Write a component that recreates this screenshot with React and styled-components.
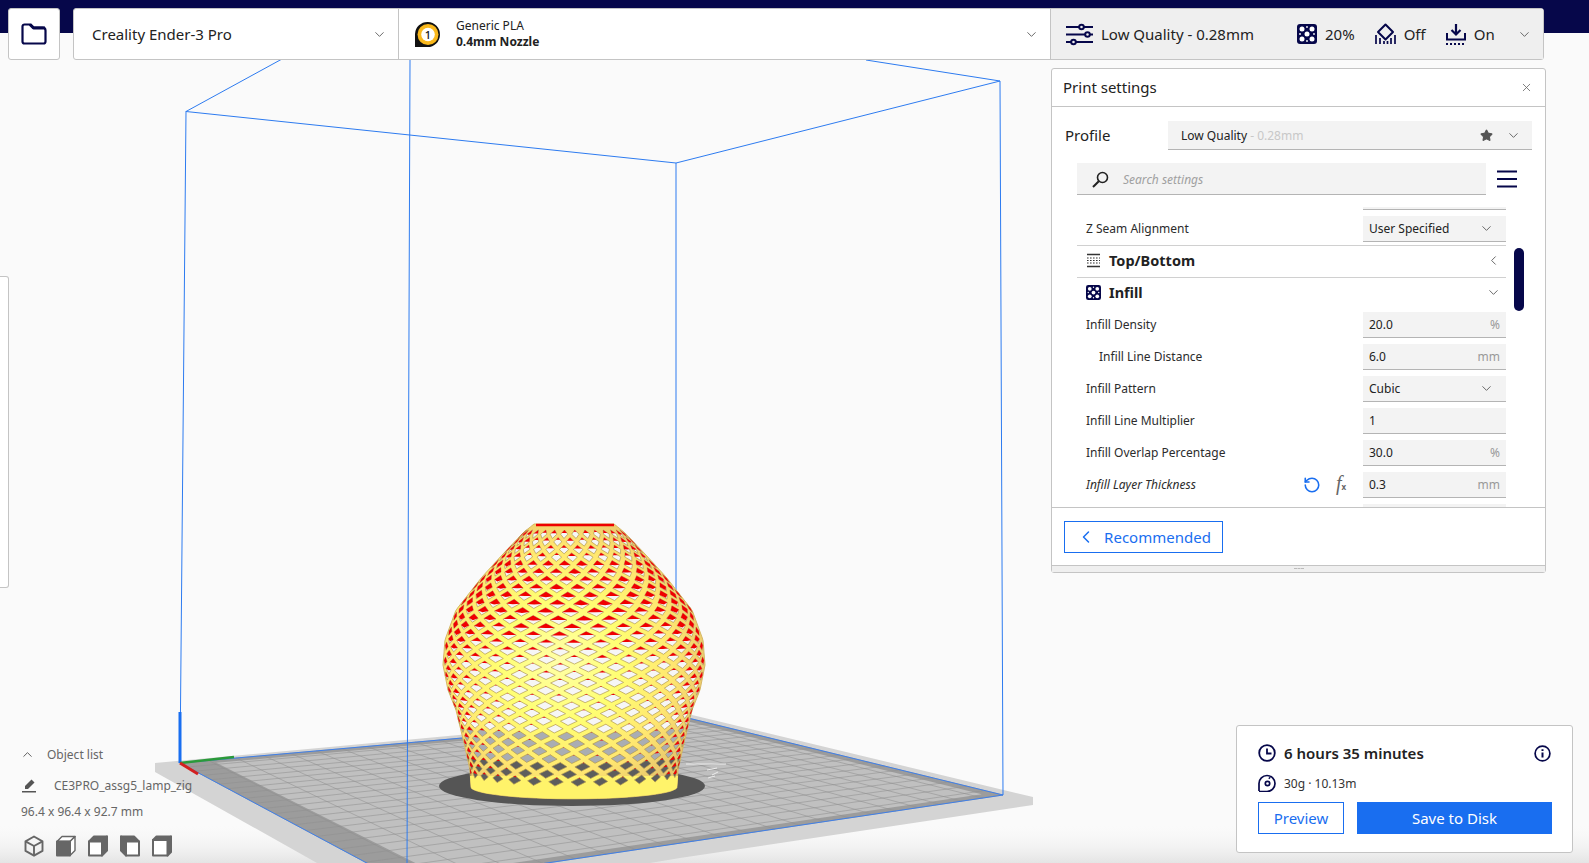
import React from "react";
import styled, { createGlobalStyle } from "styled-components";
import { X, ChevronDown, ChevronLeft, ChevronUp, Star, RotateCcw } from "lucide-react";

const NAVY = "#06074a";
const BLUE = "#196ef0";

const GlobalStyle = createGlobalStyle`
  html, body { margin: 0; padding: 0; background: #fafafa; overflow: hidden; }
  * { box-sizing: border-box; }
  body { font-family: "Noto Sans", "Open Sans", sans-serif; color: #222; }
`;

const Root = styled.div`
  position: relative;
  width: 1589px;
  height: 863px;
  overflow: hidden;
  display: flex;
  flex-direction: column;
  padding-top: 8px;
  background: linear-gradient(${NAVY} 33px, #fafafa 33px);
`;

const SceneLayer = styled.svg`
  position: absolute;
  inset: 0;
`;

const TopRow = styled.div`
  position: relative;
  display: flex;
  gap: 13px;
  height: 52px;
  padding: 0 45px 0 8px;
`;

const FolderButton = styled.div`
  width: 52px;
  display: flex;
  align-items: center;
  justify-content: center;
  background: #fff;
  border: 1px solid #c4c4c4;
  border-radius: 3px;
`;

const MainBar = styled.div`
  flex: 1;
  display: flex;
  background: #fff;
  border: 1px solid #c4c4c4;
  border-radius: 3px;
`;

const PrinterPick = styled.div`
  width: 325px;
  display: flex;
  align-items: center;
  justify-content: space-between;
  padding: 0 11px 0 18px;
  border-right: 1px solid #c4c4c4;
  font-size: 15px;
  color: #222;
`;

const MaterialPick = styled.div`
  width: 652px;
  display: flex;
  align-items: center;
  padding: 0 11px 0 15px;
  border-right: 1px solid #c4c4c4;
`;

const MaterialText = styled.div`
  flex: 1;
  display: flex;
  flex-direction: column;
  margin-left: 15px;
  font-size: 12px;
  line-height: 16px;
  color: #222;
  & b { font-weight: 700; }
`;

const QualityPick = styled.div`
  flex: 1;
  display: flex;
  align-items: center;
  padding: 0 11px 0 15px;
  background: #efefef;
  font-size: 15px;
  color: #222;
`;

const QualityItem = styled.div`
  display: flex;
  align-items: center;
  gap: 8px;
  margin-left: ${(p) => p.$left || 0}px;
`;

const Workspace = styled.div`
  position: relative;
  flex: 1;
  display: flex;
  justify-content: space-between;
`;

const LeftColumn = styled.div`
  display: flex;
  flex-direction: column;
  width: 220px;
`;

const ToolEdge = styled.div`
  width: 9px;
  height: 312px;
  margin-top: 216px;
  background: #fff;
  border: 1px solid #c4c4c4;
  border-left: 0;
  border-radius: 0 3px 3px 0;
`;

const ObjectInfo = styled.div`
  margin-top: auto;
  display: flex;
  flex-direction: column;
  font-size: 12px;
  color: #666;
  padding-bottom: 6px;
`;

const InfoLine = styled.div`
  display: flex;
  align-items: center;
  height: ${(p) => p.$h}px;
  padding-left: ${(p) => p.$pad}px;
  gap: ${(p) => p.$gap}px;
  white-space: nowrap;
`;

const ViewRow = styled.div`
  display: flex;
  gap: 10px;
  padding-left: 23px;
  margin-top: 15px;
`;

const RightColumn = styled.div`
  display: flex;
  flex-direction: column;
  align-items: flex-end;
  width: 522px;
  padding: 8px 16px 10px 0;
`;

const PrintPanel = styled.section`
  width: 495px;
  margin-right: 27px;
  height: 505px;
  display: flex;
  flex-direction: column;
  background: #fff;
  border: 1px solid #c4c4c4;
  border-radius: 3px;
`;

const PanelHeader = styled.header`
  height: 38px;
  flex: none;
  display: flex;
  align-items: center;
  justify-content: space-between;
  padding: 0 12px 1px 11px;
  border-bottom: 1px solid #c4c4c4;
  font-size: 15px;
  color: #222;
`;

const ProfileRow = styled.div`
  display: flex;
  align-items: center;
  height: 29px;
  margin: 14px 13px 0 13px;
  font-size: 15px;
`;

const ProfileLabel = styled.div`
  width: 103px;
  margin-top: -2px;
`;

const ProfileBox = styled.div`
  flex: 1;
  height: 29px;
  display: flex;
  align-items: center;
  padding: 0 11px 0 13px;
  background: #f3f3f3;
  border-bottom: 1px solid #b4b4b4;
  font-size: 12px;
  & span { color: #c8c8c8; }
  & em { flex: 1; font-style: normal; }
`;

const SearchRow = styled.div`
  display: flex;
  align-items: center;
  height: 32px;
  margin: 13px 28px 0 25px;
  gap: 11px;
`;

const SearchBox = styled.div`
  flex: 1;
  height: 32px;
  display: flex;
  align-items: center;
  gap: 14px;
  padding: 1px 0 0 15px;
  background: #f3f3f3;
  border-bottom: 1px solid #b4b4b4;
  font-size: 12px;
  font-style: italic;
  color: #a0a0a0;
`;

const SettingsClip = styled.div`
  position: relative;
  height: 300px;
  margin-top: 12px;
  overflow: hidden;
  flex: none;
`;

const SettingsList = styled.div`
  margin: -26px 39px 0 25px;
`;

const SettingRow = styled.div`
  height: 32px;
  display: flex;
  align-items: center;
  padding-left: ${(p) => (p.$indent ? 22 : 9)}px;
  font-size: 12px;
  font-style: ${(p) => (p.$italic ? "italic" : "normal")};
  color: #2c2c2c;
`;

const RowLabel = styled.div`
  flex: 1;
  margin-top: -2px;
`;

const FieldBox = styled.div`
  width: 143px;
  height: 26px;
  display: flex;
  align-items: center;
  justify-content: space-between;
  padding: 0 6px;
  background: #f3f3f3;
  border-bottom: 1px solid #b4b4b4;
  font-size: 12px;
  font-style: normal;
  color: #222;
  & span { color: #999; }
`;

const SectionRow = styled.div`
  height: 32px;
  display: flex;
  align-items: center;
  padding: 0 5px 3px 9px;
  gap: 8px;
  border-top: 1px solid #d0d0d0;
  font-size: 14.5px;
  font-weight: 700;
  color: #222;
  & div { flex: 1; }
`;

const FxMark = styled.div`
  width: 13px;
  margin: 0 14px 0 15px;
  font-family: "Liberation Serif", serif;
  font-style: italic;
  font-size: 20px;
  line-height: 18px;
  white-space: nowrap;
  color: #666;
  & small { font-size: 8px; font-weight: 700; font-style: normal; font-family: "Noto Sans", sans-serif; }
`;

const ScrollThumb = styled.div`
  position: absolute;
  right: 21px;
  top: 41px;
  width: 10px;
  height: 63px;
  border-radius: 5px;
  background: ${NAVY};
`;

const PanelFooter = styled.div`
  height: 58px;
  flex: none;
  padding: 13px 12px;
  border-top: 1px solid #c4c4c4;
`;

const OutlineButton = styled.div`
  width: ${(p) => p.$w}px;
  height: 32px;
  display: flex;
  align-items: center;
  justify-content: center;
  gap: ${(p) => p.$gap || 0}px;
  border: 1px solid ${BLUE};
  font-size: 15px;
  color: ${BLUE};
`;

const ResizeHandle = styled.div`
  flex: 1;
  display: flex;
  justify-content: center;
  padding-top: 2px;
  background: #efefef;
  border-top: 1px solid #c4c4c4;
  & i { width: 10px; height: 1px; border-top: 1px dashed #bbb; }
`;

const ActionPanel = styled.section`
  width: 337px;
  height: 128px;
  margin-top: auto;
  padding: 14px 20px 18px 21px;
  display: flex;
  flex-direction: column;
  background: #fff;
  border: 1px solid #c4c4c4;
  border-radius: 3px;
`;

const TimeRow = styled.div`
  display: flex;
  align-items: center;
  gap: 8px;
  height: 26px;
  padding-right: 1px;
  font-size: 15px;
  font-weight: 600;
  color: #222;
  & div { flex: 1; }
`;

const WeightRow = styled.div`
  display: flex;
  align-items: center;
  gap: 8px;
  height: 22px;
  margin-top: 6px;
  font-size: 12px;
  color: #333;
`;

const ActionRow = styled.div`
  display: flex;
  gap: 13px;
  margin-top: auto;
`;

const SaveButton = styled.div`
  flex: 1;
  height: 32px;
  display: flex;
  align-items: center;
  justify-content: center;
  background: ${BLUE};
  font-size: 15px;
  color: #fff;
`;

/* ---------- icons ---------- */

const FolderIcon = () => (
  <svg width="26" height="22" viewBox="0 0 26 22" fill="none" stroke={NAVY} strokeWidth="2.2" strokeLinejoin="round">
    <path d="M1.5 3.500a2 2 0 0 1 2-2h6l3 3h9a3 3 0 0 1 3 3v11a2 2 0 0 1-2 2H3.500a2 2 0 0 1-2-2z" />
    <path d="M9 1.500l3.500 3.500H24" strokeWidth="3" />
  </svg>
);

const NozzleBadge = () => (
  <svg width="27" height="27" viewBox="0 0 27 27">
    <path d="M1 25V13a12.500 12.500 0 1 1 12.500 13H1z" fill="#111" />
    <circle cx="14" cy="13.500" r="10.500" fill="#f9b81c" />
    <circle cx="14" cy="13.500" r="6.800" fill="#fff" />
    <text x="14" y="17.600" textAnchor="middle" fontSize="11" fontWeight="500" fill="#111" fontFamily="Noto Sans">1</text>
  </svg>
);

const SlidersIcon = () => (
  <svg width="27" height="23" viewBox="0 0 27 23" fill="none" stroke={NAVY} strokeWidth="2">
    <path d="M0 4h13M18 4h9M0 11.500h19M24 11.500h3M0 19h5M10 19h17" />
    <circle cx="15.500" cy="4" r="2.300" />
    <circle cx="21.500" cy="11.500" r="2.300" />
    <circle cx="7.500" cy="19" r="2.300" />
  </svg>
);

const BIG_DOTS = [[5, 5], [15, 5], [5, 15], [15, 15], [10, 10]];
const SMALL_DOTS = [[10, 3], [3, 10], [17, 10], [10, 17]];

const InfillIcon = ({ size = 20 }) => (
  <svg width={size} height={size} viewBox="0 0 20 20">
    <rect width="20" height="20" rx="3" fill={NAVY} />
    {BIG_DOTS.map(([x, y]) => (
      <circle key={x + "-" + y} cx={x} cy={y} r="2.500" fill="#fff" />
    ))}
    {SMALL_DOTS.map(([x, y]) => (
      <circle key={x + "-" + y} cx={x} cy={y} r="0.900" fill="#fff" />
    ))}
  </svg>
);

const SupportIcon = () => (
  <svg width="21" height="22" viewBox="0 0 21 22" fill="none" stroke={NAVY} strokeWidth="2">
    <path d="M10.500 1.500L18 9l-7.500 7.500L3 9z" strokeLinejoin="round" />
    <path d="M1 12v9M5 15v6M9 18v3M12.500 18v3M16 15v6M20 12v9" strokeWidth="1.700" />
  </svg>
);

const AdhesionIcon = () => (
  <svg width="20" height="21" viewBox="0 0 20 21" fill="none" stroke={NAVY} strokeWidth="2.200">
    <path d="M10 0v10M5.500 6l4.500 4.500L14.500 6" />
    <path d="M1 9v6.500h18V9" strokeWidth="2" />
    <path d="M0 20h20" strokeDasharray="2 2" strokeWidth="2" />
  </svg>
);

const SearchIcon = () => (
  <svg width="17" height="17" viewBox="0 0 17 17" fill="none" stroke="#222" strokeWidth="1.600">
    <circle cx="10.500" cy="6.500" r="5" />
    <path d="M6.800 10.200L1 16" strokeWidth="2" />
  </svg>
);

const HamburgerIcon = () => (
  <svg width="20" height="18" viewBox="0 0 20 18" stroke={NAVY} strokeWidth="2.200">
    <path d="M0 1.500h20M0 9h20M0 16.500h20" />
  </svg>
);

const TopBottomIcon = () => (
  <svg width="15" height="15" viewBox="0 0 15 15" fill="none" stroke="#333">
    <path d="M1 1.500h13M1 13.500h13" strokeWidth="1.600" />
    <path d="M1 5h13M1 7.500h13M1 10h13" strokeWidth="1" strokeDasharray="1.600 1.400" />
  </svg>
);

const ClockIcon = () => (
  <svg width="18" height="18" viewBox="0 0 18 18" fill="none" stroke={NAVY} strokeWidth="1.800">
    <circle cx="9" cy="9" r="7.800" />
    <path d="M9 4.500v5h4.500" />
  </svg>
);

const InfoIcon = () => (
  <svg width="17" height="17" viewBox="0 0 17 17" fill="none" stroke={NAVY} strokeWidth="1.700">
    <circle cx="8.500" cy="8.500" r="7.400" />
    <path d="M8.500 7.500v5M8.500 4.200v1.800" strokeWidth="2" />
  </svg>
);

const SpoolIcon = () => (
  <svg width="18" height="18" viewBox="0 0 18 18" fill="none" stroke={NAVY} strokeWidth="1.700">
    <path d="M1 17V9.500a8 8 0 1 1 8 8H1" />
    <circle cx="9.500" cy="9.500" r="2.200" />
    <path d="M11 3.500l1 1" strokeWidth="2" />
  </svg>
);

const PencilIcon = () => (
  <svg width="15" height="15" viewBox="0 0 15 15" fill="#555">
    <path d="M9.500 1.500l3 3L6 11H3V8z" />
    <rect x="0" y="13" width="14" height="1.500" />
  </svg>
);

const G = "#666";

const CubeIcon = ({ kind }) => {
  if (kind === "iso") {
    return (
      <svg width="22" height="22" viewBox="0 0 22 22" fill="none" stroke={G} strokeWidth="1.900" strokeLinejoin="round">
        <path d="M11 1.500l8.500 4.800v9.600L11 20.700l-8.500-4.800V6.300z" />
        <path d="M2.500 6.300L11 11l8.500-4.700M11 11v9.700" />
      </svg>
    );
  }
  const offset = kind === "back" ? 3.5 : 5;
  const top = `M2 ${1.5 + offset}L${2 + offset} 1.500H20L${20 - offset} ${1.5 + offset}Z`;
  const side = `M20 1.500V${20.5 - offset}L${20 - offset} 20.500V${1.5 + offset}Z`;
  const front = `M2 ${1.5 + offset}H${20 - offset}V20.500H2Z`;
  return (
    <svg width="22" height="22" viewBox="0 0 22 22" stroke={G} strokeWidth="2" strokeLinejoin="round">
      <g transform={kind === "left" ? "matrix(-1 0 0 1 22 0)" : undefined}>
        <path d={top} fill={kind === "front" ? "#fff" : G} strokeWidth={kind === "front" ? 1.4 : 2} />
        <path d={side} fill={kind === "front" ? "#fff" : G} strokeWidth={kind === "front" ? 1.4 : 2} />
        <path d={front} fill={kind === "front" ? G : "#fff"} />
      </g>
    </svg>
  );
};

/* ---------- 3d view ---------- */

function makeQuad(p0, p1, p2, p3) {
  const dx1 = p1[0] - p2[0], dx2 = p3[0] - p2[0], dx3 = p0[0] - p1[0] + p2[0] - p3[0];
  const dy1 = p1[1] - p2[1], dy2 = p3[1] - p2[1], dy3 = p0[1] - p1[1] + p2[1] - p3[1];
  const den = dx1 * dy2 - dx2 * dy1;
  const g = (dx3 * dy2 - dx2 * dy3) / den;
  const h = (dx1 * dy3 - dx3 * dy1) / den;
  const a = p1[0] - p0[0] + g * p1[0], b = p3[0] - p0[0] + h * p3[0];
  const d = p1[1] - p0[1] + g * p1[1], e = p3[1] - p0[1] + h * p3[1];
  return (u, v) => {
    const w = g * u + h * v + 1;
    return [(a * u + b * v + p0[0]) / w, (d * u + e * v + p0[1]) / w];
  };
}

const plate = makeQuad([180, 763], [688, 718], [1003, 795], [406, 884]);

const poly = (pts) => "M" + pts.map((p) => p[0].toFixed(1) + " " + p[1].toFixed(1)).join("L") + "Z";
const plateRect = (u0, u1, v0, v1) => poly([plate(u0, v0), plate(u1, v0), plate(u1, v1), plate(u0, v1)]);

function gridPath() {
  let d = "";
  for (let i = 0; i <= 22; i++) {
    const t = i / 22;
    const a = plate(t, 0), b = plate(t, 1), c = plate(0, t), e = plate(1, t);
    d += `M${a[0]} ${a[1]}L${b[0]} ${b[1]}M${c[0]} ${c[1]}L${e[0]} ${e[1]}`;
  }
  return d;
}

const RADII = [[524, 40], [532, 50], [555, 72], [577, 92], [610, 118], [640, 129], [665, 131], [690, 126], [710, 118], [743, 110], [770, 104], [787, 103]];

function radius(y) {
  for (let i = 1; i < RADII.length; i++) {
    if (y <= RADII[i][0]) {
      const [y0, r0] = RADII[i - 1];
      const [y1, r1] = RADII[i];
      return r0 + ((r1 - r0) * (y - y0)) / (y1 - y0);
    }
  }
  return 103;
}

const CX = 574;
const project = (th, y) => {
  const r = radius(y);
  const twist = 0.22 * Math.sin((Math.PI * (y - 524)) / 263);
  const t = th + twist;
  return [CX + r * Math.sin(t), y + 0.115 * r * ((y - 524) / 263) * Math.cos(t), Math.cos(t)];
};

const lerp = (a, b, t) => [a[0] + (b[0] - a[0]) * t, a[1] + (b[1] - a[1]) * t];

function buildVase() {
  const out = { white: "", grey: "", dark: "", red: "" };
  const N = 29, dTh = (2 * Math.PI) / N, dy = 7.4;
  for (let j = 0; 534 + j * dy < 778; j++) {
    const y = 534 + j * dy;
    for (let i = 0; i < N; i++) {
      const th = (i + (j % 2) / 2) * dTh;
      const c = project(th, y);
      if (c[2] < 0.08) continue;
      const L = project(th - (dTh / 2) * 0.66, y);
      const R = project(th + (dTh / 2) * 0.66, y);
      const T = project(th, y - dy * 0.56);
      const B = project(th, y + dy * 0.56);
      const body = poly([L, T, R, B]);
      const seed = Math.abs(Math.sin(i * 12.9898 + j * 78.233) * 43758.5453) % 1;
      if (y > 755) out.dark += body;
      else if (y > 720) out.grey += body;
      else out.white += body;
      const edge = 1 - c[2];
      let f = y < 560 ? 0.3 : y < 610 ? 0.55 : y < 660 ? 0.55 - ((y - 610) / 50) * 0.4 : y < 720 ? 0.15 - ((y - 660) / 60) * 0.09 : 0.04;
      f += edge * edge * 0.9 + (seed - 0.5) * 0.16;
      f = Math.max(0.02, Math.min(1, f));
      const g = Math.min(1, f * 2);
      out.red += poly([lerp(T, L, g), T, lerp(T, R, g), lerp(T, B, f)]);
    }
  }
  const left = [], right = [], bottom = [];
  for (let y = 524; y <= 787; y += 3) {
    const r = radius(y);
    left.push([CX - r, y]);
    right.unshift([CX + r, y]);
  }
  const band = [[CX - 104, 776], [CX + 104, 776]];
  for (let a = -Math.PI / 2; a <= Math.PI / 2; a += 0.1) {
    bottom.push(project(a, 787));
  }
  out.outline = poly([...left, ...bottom, ...right]);
  out.band = poly([band[0], ...bottom, band[1]]);
  return out;
}

const vase = buildVase();

const Scene = () => (
  <SceneLayer width="1589" height="863" viewBox="0 0 1589 863">
    <defs>
      <linearGradient id="floor" x1="0" y1="0" x2="0" y2="1">
        <stop offset="0" stopColor="#fafafa" stopOpacity="0" />
        <stop offset="1" stopColor="#e4e4e4" />
      </linearGradient>
      <radialGradient id="body" gradientUnits="userSpaceOnUse" cx="560" cy="660" r="152">
        <stop offset="0" stopColor="#ffffa8" />
        <stop offset="0.4" stopColor="#ffff72" />
        <stop offset="0.75" stopColor="#ffe670" />
        <stop offset="1" stopColor="#e8c66c" />
      </radialGradient>
    </defs>
    <rect y="823" width="1589" height="40" fill="url(#floor)" />
    <path d="M155 763L688 714L1033 797V805L680 858L650 863H317L155 772Z" fill="#d4d4d4" />
    <path d={plateRect(0, 1, 0, 1)} fill="#9c9c9c" />
    <path d={plateRect(0.05, 0.975, 0.03, 0.975)} fill="#c0c0c0" />
    <path d={gridPath()} stroke="#8f8f8f" strokeOpacity="0.55" strokeWidth="1" fill="none" />
    <path d={plateRect(0, 1, 0, 1)} fill="none" stroke="#3f7fe8" strokeWidth="1" />
    <g fill="none" stroke="#2d7bf0" strokeWidth="1">
      <path d="M282 59L186 111.500L676 163L1000 81L866 60" />
      <path d="M186 111L180 763M410 60L407 863M676 163V740M1000 81L1003 795" />
    </g>
    <path d="M180 763V712" stroke="#196ef0" strokeWidth="3" />
    <path d="M180 763L234 757" stroke="#2a9a3a" strokeWidth="2.500" />
    <path d="M180 763L198 774" stroke="#d32020" strokeWidth="3" />
    <path d="M686 764h40M707 770l10-2M712 775l6-3M708 778l7-2" stroke="#ededed" strokeWidth="1" />
    <ellipse cx="572" cy="786" rx="133" ry="20" fill="#555" />
    <path d={vase.outline} fill="url(#body)" stroke="#d6b765" strokeWidth="1" />
    <path d={vase.band} fill="#fff36a" />
    <g stroke="#b09a50" strokeWidth="0.7">
      <path d={vase.white} fill="#f6f6f6" />
      <path d={vase.grey} fill="#a9adb3" />
      <path d={vase.dark} fill="#5d5d5d" />
    </g>
    <path d={vase.red} fill="#f00000" />
    <path d="M536 525H614" stroke="#ee0000" strokeWidth="2.500" />
  </SceneLayer>
);

/* ---------- data ---------- */

const INFILL_ROWS = [
  { label: "Infill Density", value: "20.0", unit: "%" },
  { label: "Infill Line Distance", value: "6.0", unit: "mm", indent: true },
  { label: "Infill Pattern", value: "Cubic", select: true },
  { label: "Infill Line Multiplier", value: "1" },
  { label: "Infill Overlap Percentage", value: "30.0", unit: "%" },
];

const Chevron = (props) => <ChevronDown size={15} color="#555" strokeWidth={1.4} {...props} />;

const Field = ({ value, unit, select }) => (
  <FieldBox>
    {value}
    {unit && <span>{unit}</span>}
    {select && <Chevron style={{ marginRight: 6 }} />}
  </FieldBox>
);

export default function App() {
  return (
    <Root>
      <GlobalStyle />
      <Scene />
      <TopRow>
        <FolderButton>
          <FolderIcon />
        </FolderButton>
        <MainBar>
          <PrinterPick>
            Creality Ender-3 Pro
            <Chevron />
          </PrinterPick>
          <MaterialPick>
            <NozzleBadge />
            <MaterialText>
              <span>Generic PLA</span>
              <b>0.4mm Nozzle</b>
            </MaterialText>
            <Chevron />
          </MaterialPick>
          <QualityPick>
            <QualityItem>
              <SlidersIcon />
              Low Quality - 0.28mm
            </QualityItem>
            <QualityItem $left={43}>
              <InfillIcon />
              20%
            </QualityItem>
            <QualityItem $left={20}>
              <SupportIcon />
              Off
            </QualityItem>
            <QualityItem $left={20}>
              <AdhesionIcon />
              On
            </QualityItem>
            <Chevron style={{ marginLeft: "auto" }} />
          </QualityPick>
        </MainBar>
      </TopRow>
      <Workspace>
        <LeftColumn>
          <ToolEdge />
          <ObjectInfo>
            <InfoLine $h={28} $pad={20} $gap={12}>
              <ChevronUp size={15} color="#555" strokeWidth={1.5} />
              Object list
            </InfoLine>
            <InfoLine $h={34} $pad={22} $gap={17}>
              <PencilIcon />
              CE3PRO_assg5_lamp_zig
            </InfoLine>
            <InfoLine $h={18} $pad={21}>96.4 x 96.4 x 92.7 mm</InfoLine>
            <ViewRow>
              <CubeIcon kind="iso" />
              <CubeIcon kind="front" />
              <CubeIcon kind="right" />
              <CubeIcon kind="left" />
              <CubeIcon kind="back" />
            </ViewRow>
          </ObjectInfo>
        </LeftColumn>
        <RightColumn>
          <PrintPanel>
            <PanelHeader>
              Print settings
              <X size={13} color="#666" strokeWidth={1.5} />
            </PanelHeader>
            <ProfileRow>
              <ProfileLabel>Profile</ProfileLabel>
              <ProfileBox>
                <em>Low Quality <span>- 0.28mm</span></em>
                <Star size={13} color="#555" fill="#555" />
                <Chevron style={{ marginLeft: 13 }} />
              </ProfileBox>
            </ProfileRow>
            <SearchRow>
              <SearchBox>
                <SearchIcon />
                Search settings
              </SearchBox>
              <HamburgerIcon />
            </SearchRow>
            <SettingsClip>
              <SettingsList>
                <SettingRow>
                  <RowLabel />
                  <Field value="" />
                </SettingRow>
                <SettingRow>
                  <RowLabel>Z Seam Alignment</RowLabel>
                  <Field value="User Specified" select />
                </SettingRow>
                <SectionRow>
                  <TopBottomIcon />
                  <div>Top/Bottom</div>
                  <ChevronLeft size={15} color="#555" strokeWidth={1.4} />
                </SectionRow>
                <SectionRow>
                  <InfillIcon size={15} />
                  <div>Infill</div>
                  <Chevron />
                </SectionRow>
                {INFILL_ROWS.map((row) => (
                  <SettingRow key={row.label} $indent={row.indent}>
                    <RowLabel>{row.label}</RowLabel>
                    <Field value={row.value} unit={row.unit} select={row.select} />
                  </SettingRow>
                ))}
                <SettingRow $italic>
                  <RowLabel>Infill Layer Thickness</RowLabel>
                  <RotateCcw size={18} color={BLUE} strokeWidth={2.1} />
                  <FxMark>f<small>x</small></FxMark>
                  <Field value="0.3" unit="mm" />
                </SettingRow>
                <SettingRow>
                  <RowLabel />
                  <Field value="" />
                </SettingRow>
              </SettingsList>
              <ScrollThumb />
            </SettingsClip>
            <PanelFooter>
              <OutlineButton $w={159} $gap={8}>
                <ChevronLeft size={20} color={BLUE} strokeWidth={1.8} />
                Recommended
              </OutlineButton>
            </PanelFooter>
            <ResizeHandle>
              <i />
            </ResizeHandle>
          </PrintPanel>
          <ActionPanel>
            <TimeRow>
              <ClockIcon />
              <div>6 hours 35 minutes</div>
              <InfoIcon />
            </TimeRow>
            <WeightRow>
              <SpoolIcon />
              30g · 10.13m
            </WeightRow>
            <ActionRow>
              <OutlineButton $w={86}>Preview</OutlineButton>
              <SaveButton>Save to Disk</SaveButton>
            </ActionRow>
          </ActionPanel>
        </RightColumn>
      </Workspace>
    </Root>
  );
}
